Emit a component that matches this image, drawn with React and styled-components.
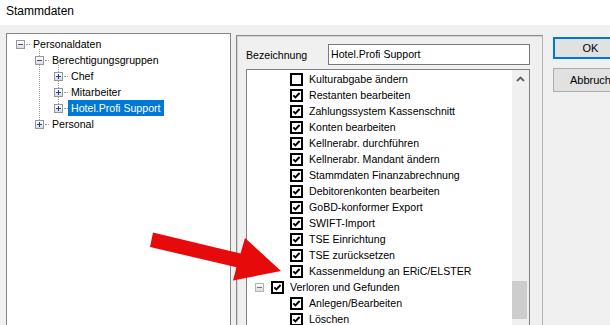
import React from "react";
import styled, { createGlobalStyle, css } from "styled-components";

const Global = createGlobalStyle`
  html, body { margin: 0; padding: 0; overflow: hidden; }
  body { font-family: "Liberation Sans", Arial, sans-serif; font-size: 10.6px; color: #000; background: #f0f0f0; }
`;

const Page = styled.div`
  position: relative;
  width: 610px;
  height: 325px;
  overflow: hidden;
  background: #f0f0f0;
`;

const TitleBar = styled.div`
  height: 25px;
  background: #fff;
  padding-left: 6px;
  font-size: 12px;
  line-height: 22px;
  box-sizing: border-box;
`;

const Body = styled.div`
  display: flex;
  align-items: flex-start;
  padding: 8px 0 0 6px;
  height: 300px;
  box-sizing: border-box;
`;

const TreePanel = styled.div`
  flex: none;
  width: 225px;
  height: 310px;
  box-sizing: border-box;
  background: #fff;
  border: 1px solid #868686;
  padding-top: 2px;
`;

const TreeGroup = styled.div`
  position: relative;
  &::before {
    content: "";
    position: absolute;
    left: ${(p) => p.$line}px;
    top: -3px;
    bottom: 8px;
    border-left: 1px dotted #9a9a9a;
  }
`;

const TreeRow = styled.div`
  position: relative;
  z-index: 1;
  display: flex;
  align-items: center;
  height: 16px;
  padding-left: ${(p) => 9 + p.$level * 19}px;
  white-space: nowrap;
`;

const ExpBox = styled.span`
  flex: none;
  display: block;
  width: 9px;
  height: 9px;
  box-sizing: border-box;
  border: 1px solid ${(p) => (p.$light ? "#b4b4b4" : "#969696")};
  background: linear-gradient(#ffffff, #dcdcdc);
  svg { display: block; }
`;

const HDots = styled.span`
  flex: none;
  width: 4px;
  margin-left: 1px;
  height: 0;
  border-top: 1px dotted #9a9a9a;
`;

const TreeLabel = styled.span`
  line-height: 16px;
  padding: 0 3px;
  ${(p) =>
    p.$selected &&
    css`
      background: #0078d7;
      color: #fff;
    `}
`;

const EditPanel = styled.div`
  flex: none;
  margin-left: 5px;
  margin-top: 2px;
  width: 307px;
  height: 310px;
  box-sizing: border-box;
  border: 1px solid;
  border-color: #8a8a8a #b4b4b4 #b4b4b4 #8a8a8a;
  box-shadow: inset 1px 1px 0 #d4d4d4;
  padding: 8px 12px 0 9px;
`;

const FieldRow = styled.div`
  display: flex;
  align-items: center;
  height: 21px;
`;

const FieldLabel = styled.span`
  flex: none;
  width: 82px;
  padding-top: 1px;
`;

const TextBox = styled.div`
  flex: none;
  width: 202px;
  height: 21px;
  box-sizing: border-box;
  border: 1px solid #7a7a7a;
  background: #fff;
  padding-left: 2px;
  line-height: 18px;
`;

const ListBox = styled.div`
  margin-top: 4px;
  width: 284px;
  height: 280px;
  box-sizing: border-box;
  border: 1px solid #828282;
  background: #fff;
  display: flex;
`;

const ListRows = styled.div`
  flex: 1;
  padding-top: 1px;
`;

const ListRow = styled.div`
  display: flex;
  align-items: center;
  height: 16px;
  padding-left: ${(p) => p.$indent}px;
  white-space: nowrap;
`;

const CheckBox = styled.span`
  flex: none;
  display: block;
  width: 13px;
  height: 13px;
  box-sizing: border-box;
  border: 2px solid #000;
  background: #fff;
  margin-left: ${(p) => p.$gap || 0}px;
  margin-right: 6px;
  svg { display: block; }
`;

const ScrollBar = styled.div`
  flex: none;
  width: 17px;
  background: #f0f0f0;
  display: flex;
  flex-direction: column;
`;

const ScrollButton = styled.div`
  height: 17px;
  display: flex;
  align-items: center;
  justify-content: center;
`;

const ScrollThumb = styled.div`
  width: 15px;
  margin-top: ${(p) => p.$offset}px;
  height: ${(p) => p.$size}px;
  background: #cdcdcd;
`;

const ButtonColumn = styled.div`
  flex: none;
  margin-left: 10px;
  margin-top: 4px;
  display: flex;
  flex-direction: column;
`;

const Button = styled.div`
  width: 75px;
  height: ${(p) => (p.$default ? 22 : 24)}px;
  box-sizing: border-box;
  margin-bottom: 9px;
  background: #e1e1e1;
  border: ${(p) => (p.$default ? "2px solid #0078d7" : "1px solid #adadad")};
  display: flex;
  align-items: center;
  justify-content: center;
  font-size: 11px;
`;

const Annotation = styled.svg`
  position: absolute;
  left: 0;
  top: 0;
  pointer-events: none;
`;

const Sign = ({ plus, color }) => (
  <svg width="7" height="7" viewBox="0 0 7 7">
    <line x1="1" y1="3.5" x2="6" y2="3.5" stroke={color} strokeWidth="1" />
    {plus && <line x1="3.5" y1="1" x2="3.5" y2="6" stroke={color} strokeWidth="1" />}
  </svg>
);

const Expander = ({ plus, light }) => (
  <ExpBox $light={light}>
    <Sign plus={plus} color={plus ? "#1e3f8f" : light ? "#5a6f9a" : "#3a5286"} />
  </ExpBox>
);

const Check = () => (
  <CheckMark />
);

const CheckMark = () => (
  <svg width="9" height="9" viewBox="0 0 9 9">
    <polyline points="1.3,4.3 3.4,6.4 7.6,2" fill="none" stroke="#000" strokeWidth="1.9" />
  </svg>
);

const Node = ({ level, plus, label, selected }) => (
  <TreeRow $level={level}>
    <Expander plus={plus} />
    <HDots />
    <TreeLabel $selected={selected}>{label}</TreeLabel>
  </TreeRow>
);

const items = [
  { label: "Kulturabgabe ändern", checked: false },
  { label: "Restanten bearbeiten", checked: true },
  { label: "Zahlungssystem Kassenschnitt", checked: true },
  { label: "Konten bearbeiten", checked: true },
  { label: "Kellnerabr. durchführen", checked: true },
  { label: "Kellnerabr. Mandant ändern", checked: true },
  { label: "Stammdaten Finanzabrechnung", checked: true },
  { label: "Debitorenkonten bearbeiten", checked: true },
  { label: "GoBD-konformer Export", checked: true },
  { label: "SWIFT-Import", checked: true },
  { label: "TSE Einrichtung", checked: true },
  { label: "TSE zurücksetzen", checked: true },
  { label: "Kassenmeldung an ERiC/ELSTER", checked: true },
];

export default function App() {
  return (
    <Page>
      <Global />
      <TitleBar>Stammdaten</TitleBar>
      <Body>
        <TreePanel>
          <Node level={0} label="Personaldaten" />
          <TreeGroup $line={32}>
            <Node level={1} label="Berechtigungsgruppen" />
            <TreeGroup $line={51}>
              <Node level={2} plus label="Chef" />
              <Node level={2} plus label="Mitarbeiter" />
              <Node level={2} plus label="Hotel.Profi Support" selected />
            </TreeGroup>
            <Node level={1} plus label="Personal" />
          </TreeGroup>
        </TreePanel>

        <EditPanel>
          <FieldRow>
            <FieldLabel>Bezeichnung</FieldLabel>
            <TextBox>Hotel.Profi Support</TextBox>
          </FieldRow>
          <ListBox>
            <ListRows>
              {items.map((it) => (
                <ListRow key={it.label} $indent={43}>
                  <CheckBox>{it.checked && <CheckMark />}</CheckBox>
                  {it.label}
                </ListRow>
              ))}
              <ListRow $indent={8}>
                <Expander light />
                <CheckBox $gap={7}>
                  <CheckMark />
                </CheckBox>
                Verloren und Gefunden
              </ListRow>
              <ListRow $indent={43}>
                <CheckBox>
                  <CheckMark />
                </CheckBox>
                Anlegen/Bearbeiten
              </ListRow>
              <ListRow $indent={43}>
                <CheckBox>
                  <CheckMark />
                </CheckBox>
                Löschen
              </ListRow>
            </ListRows>
            <ScrollBar>
              <ScrollButton>
                <svg width="9" height="6" viewBox="0 0 9 6">
                  <polyline points="1,5 4.5,1.5 8,5" fill="none" stroke="#606060" strokeWidth="1.8" />
                </svg>
              </ScrollButton>
              <ScrollThumb $offset={194} $size={38} />
            </ScrollBar>
          </ListBox>
        </EditPanel>

        <ButtonColumn>
          <Button $default>OK</Button>
          <Button>Abbruch</Button>
        </ButtonColumn>
      </Body>

      <Annotation width="610" height="325" viewBox="0 0 610 325">
        <polygon
          points="153,232.5 240.5,253.5 245,238 281,271 233,280.5 236.6,267.2 150,247"
          fill="#e60a0a"
        />
      </Annotation>
    </Page>
  );
}
